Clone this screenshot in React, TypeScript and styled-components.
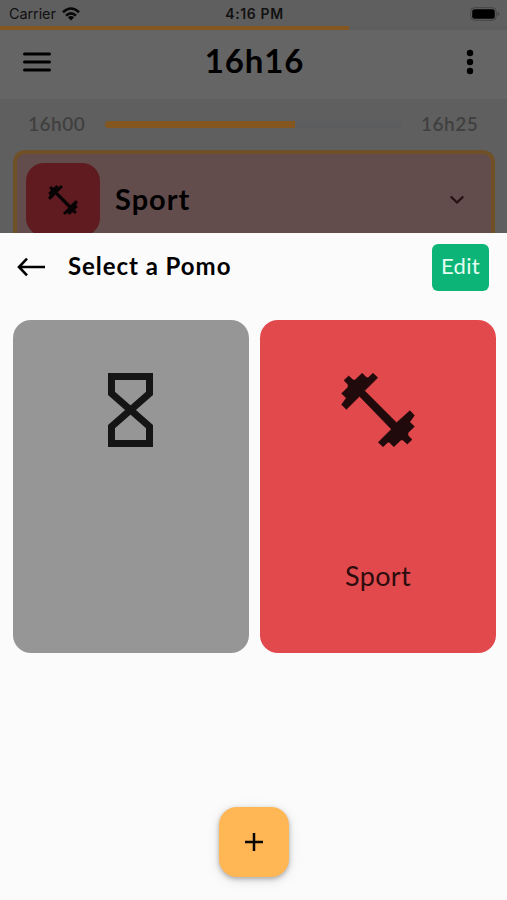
import React from 'react';
import styled, { createGlobalStyle } from 'styled-components';

const GlobalStyle = createGlobalStyle`
  *, *::before, *::after { box-sizing: border-box; }
  body { margin: 0; background: #fbfbfb; font-family: Lato, "Open Sans", sans-serif; color: #000; }
  svg { display: block; flex: none; }
`;

const Screen = styled.div`
  width: 507px;
  height: 900px;
  overflow: hidden;
  display: flex;
  flex-direction: column;
`;

const Dimmed = styled.div`
  height: 233px;
  flex: none;
  overflow: hidden;
  background: #5f5f5f;
`;

const StatusBar = styled.div`
  height: 26px;
  padding: 2px 7px 0 9px;
  display: grid;
  grid-template-columns: 1fr auto 1fr;
  align-items: center;
  font: 500 14px/20px Inter, sans-serif;
  color: #111;
`;

const Carrier = styled.div`
  display: flex;
  align-items: center;
  gap: 6px;
  font-weight: 400;
  font-size: 14.5px;
  letter-spacing: -0.1px;
`;

const Clock = styled.div`
  font-weight: 600;
  letter-spacing: 0.6px;
`;

const BatterySlot = styled.div`
  display: flex;
  justify-content: flex-end;
`;

const Bar = styled.div<{ $height: number; $value: number; $track: string; $round?: boolean }>`
  flex: 1;
  height: ${(p) => p.$height}px;
  background: ${(p) => p.$track};
  border-radius: ${(p) => (p.$round ? 4 : 0)}px;
  overflow: hidden;
  &::before {
    content: '';
    display: block;
    height: 100%;
    width: ${(p) => p.$value}%;
    background: #855720;
  }
`;

const TopBar = styled.header`
  height: 69px;
  padding: 0 32px 6px 23px;
  display: grid;
  grid-template-columns: 28px 1fr 10px;
  align-items: center;
  background: #656565;
`;

const Hour = styled.h1`
  margin: -4px 7px 0 0;
  text-align: center;
  font-weight: 700;
  font-size: 33px;
  line-height: 40px;
  letter-spacing: 0.9px;
`;

const Timeline = styled.div`
  height: 51px;
  padding: 0 28px 1px;
  display: flex;
  align-items: center;
  gap: 19px;
`;

const TimeLabel = styled.span`
  width: 58px;
  margin-top: -1px;
  font-weight: 600;
  font-size: 19px;
  letter-spacing: 0.5px;
  color: #404040;
  white-space: nowrap;
`;

const CurrentTask = styled.section`
  height: 98px;
  margin: 0 12px 0 13px;
  padding: 1px 27px 0 9px;
  border: 4px solid #705026;
  border-radius: 12px;
  background: #634c4c;
  display: flex;
  align-items: center;
`;

const TaskIcon = styled.div`
  width: 74px;
  height: 73px;
  margin-right: 15px;
  padding-right: 1px;
  border-radius: 18px;
  background: #5f1b20;
  display: flex;
  align-items: center;
  justify-content: center;
`;

const TaskName = styled.div`
  flex: 1;
  margin-top: -1px;
  font-weight: 700;
  font-size: 29px;
  line-height: 36px;
  letter-spacing: 1px;
`;

const Sheet = styled.main`
  flex: 1;
  display: flex;
  flex-direction: column;
  align-items: center;
  background: #fbfbfb;
`;

const SheetHeader = styled.div`
  align-self: stretch;
  height: 87px;
  padding: 11px 18px 0 17px;
  display: flex;
  align-items: flex-start;
`;

const BackIcon = styled.svg`
  margin-top: 13px;
`;

const SheetTitle = styled.h2`
  flex: 1;
  margin: 6px 0 0 22px;
  font-weight: 700;
  font-size: 24px;
  line-height: 32px;
  letter-spacing: 0.95px;
`;

const EditButton = styled.button`
  width: 57px;
  height: 47px;
  padding: 0 0 3px;
  border: 0;
  border-radius: 6px;
  background: #0cb577;
  color: #e4fdf2;
  font: 400 22px/44px Lato, sans-serif;
  letter-spacing: 0.3px;
`;

const Cards = styled.div`
  align-self: stretch;
  margin: 0 11px 0 13px;
  display: grid;
  grid-template-columns: 236px 236px;
  gap: 11px;
`;

const Card = styled.div<{ $color: string }>`
  height: 333px;
  padding: 53px 1px 0 0;
  border-radius: 18px;
  background: ${(p) => p.$color};
  display: flex;
  flex-direction: column;
  align-items: center;
`;

const CardName = styled.div`
  margin: 111px 0 0 1px;
  font-size: 27px;
  line-height: 36px;
  letter-spacing: 0.3px;
  color: #2c0c0d;
`;

const AddButton = styled.button`
  width: 70px;
  height: 70px;
  margin-top: 154px;
  padding: 0;
  border: 0;
  border-radius: 18px;
  background: #ffb655;
  box-shadow: 0 2px 5px rgba(0, 0, 0, 0.28), 0 3px 14px rgba(0, 0, 0, 0.1);
  display: flex;
  align-items: center;
  justify-content: center;
`;

const Dumbbell = ({ size, color }: { size: number; color: string }) => (
  <svg width={size} height={size} viewBox="62 70 220 220" fill={color} stroke={color} strokeWidth="2">
    <path d="M71 92 85 79 98 91 104 91 125 71 138 84 143 84 157 71 171 84 132 123 227 218 267 182 280 196 266 216 280 229 261 248 261 256 273 268 259 281 246 269 240 269 219 289 206 276 201 276 187 289 173 276 212 237 117 139 78 178 64 164 78 144 64 131 83 112 83 104Z" />
  </svg>
);

export default function App() {
  return (
    <>
      <GlobalStyle />
      <Screen>
        <Dimmed>
          <StatusBar>
            <Carrier>
              Carrier
              <svg width="18" height="14" viewBox="0 0 18 14" fill="none" stroke="#080808" strokeWidth="2.6">
                <path d="M1 5.2Q9-2.2 17 5.2M4 8.6Q9 4 14 8.6" />
                <path d="M9 13.5 5.8 10.3Q9 7.6 12.2 10.3Z" fill="#080808" stroke="none" />
              </svg>
            </Carrier>
            <Clock>4:16 PM</Clock>
            <BatterySlot>
              <svg width="30" height="14" viewBox="0 0 30 14">
                <rect x="0.7" y="0.7" width="25.6" height="12.6" rx="4" fill="none" stroke="#444" />
                <rect x="2.2" y="2.2" width="22.6" height="9.6" rx="2.5" fill="#000" />
                <path d="M27.7 5V9Q29.5 8.5 29.5 7T27.7 5Z" fill="#444" />
              </svg>
            </BatterySlot>
          </StatusBar>
          <Bar $height={4} $value={68.8} $track="#5d5d5d" />
          <TopBar>
            <svg width="28" height="20" viewBox="0 0 28 20" stroke="#000" strokeWidth="3" strokeLinecap="round">
              <path d="M1.5 2H26.5M1.5 10H26.5M1.5 18H26.5" />
            </svg>
            <Hour>16h16</Hour>
            <svg width="10" height="26" viewBox="0 0 10 26">
              <circle cx="5" cy="4" r="3.2" />
              <circle cx="5" cy="13" r="3.2" />
              <circle cx="5" cy="22" r="3.2" />
            </svg>
          </TopBar>
          <Timeline>
            <TimeLabel>16h00</TimeLabel>
            <Bar $height={7} $value={64} $track="#5c5d5f" $round />
            <TimeLabel>16h25</TimeLabel>
          </Timeline>
          <CurrentTask>
            <TaskIcon>
              <Dumbbell size={30} color="#080304" />
            </TaskIcon>
            <TaskName>Sport</TaskName>
            <svg width="14" height="10" viewBox="0 0 14 10" fill="none" stroke="#210f11" strokeWidth="2.2">
              <path d="M0.8 1.5 7 7.5 13.2 1.5" />
            </svg>
          </CurrentTask>
        </Dimmed>
        <Sheet>
          <SheetHeader>
            <BackIcon width="29" height="20" viewBox="0 0 29 20" fill="none" stroke="#000" strokeWidth="2.6">
              <path d="M10 1.6 2 10 10 18.4M2 10H28" />
            </BackIcon>
            <SheetTitle>Select a Pomo</SheetTitle>
            <EditButton>Edit</EditButton>
          </SheetHeader>
          <Cards>
            <Card $color="#969696">
              <svg width="45" height="74" viewBox="0 0 45 74" fill="none" stroke="#151515" strokeWidth="7">
                <path d="M3.5 3.5H41.5V20.5L22.5 37 41.5 53.5V70.5H3.5V53.5L22.5 37 3.5 20.5Z" />
              </svg>
            </Card>
            <Card $color="#e2494c">
              <Dumbbell size={74} color="#200a0b" />
              <CardName>Sport</CardName>
            </Card>
          </Cards>
          <AddButton aria-label="Add">
            <svg width="18" height="18" viewBox="0 0 18 18" stroke="#0b0804" strokeWidth="2.5">
              <path d="M9 0V18M0 9H18" />
            </svg>
          </AddButton>
        </Sheet>
      </Screen>
    </>
  );
}
